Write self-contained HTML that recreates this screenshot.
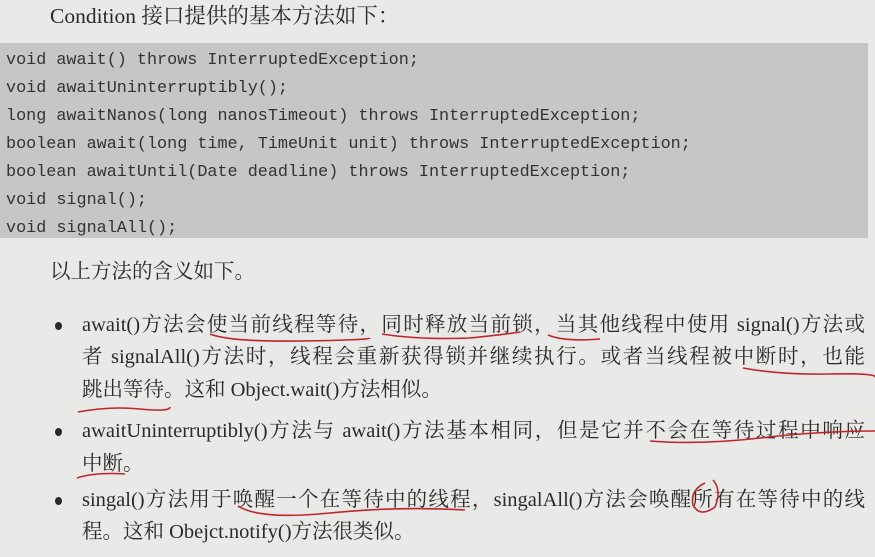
<!DOCTYPE html>
<html><head><meta charset="utf-8"><style>
body{margin:0;width:875px;height:557px;background:#e9e9e7;position:relative;overflow:hidden;color:#2a2a2a}
.t{position:absolute;white-space:nowrap;font-family:"Liberation Serif","Noto Serif CJK SC",serif;font-size:20.5px;line-height:1}
.j{width:783px;text-align:justify;text-align-last:justify;white-space:normal}
.box{position:absolute;left:0;top:43px;width:868px;height:195px;background:#c6c6c4}
.c{position:absolute;left:6px;white-space:nowrap;font-family:"Liberation Mono",monospace;font-size:16.8px;line-height:1;color:#333}
.b{position:absolute;left:55px;width:7px;height:8px;border-radius:50%;background:#2a2a2a}
</style></head><body>
<div class="t" style="left:50px;top:6px;font-size:21.5px">Condition 接口提供的基本方法如下：</div>
<div class="box"></div>
<div class="c" style="top:53px">void await() throws InterruptedException;</div>
<div class="c" style="top:81px">void awaitUninterruptibly();</div>
<div class="c" style="top:109px">long awaitNanos(long nanosTimeout) throws InterruptedException;</div>
<div class="c" style="top:137px">boolean await(long time, TimeUnit unit) throws InterruptedException;</div>
<div class="c" style="top:165px">boolean awaitUntil(Date deadline) throws InterruptedException;</div>
<div class="c" style="top:193px">void signal();</div>
<div class="c" style="top:221px">void signalAll();</div>
<div class="t" style="left:50px;top:262px">以上方法的含义如下。</div>
<div class="b" style="top:322px"></div>
<div class="t j" style="left:82px;top:315px">await()方法会使当前线程等待，同时释放当前锁，当其他线程中使用 signal()方法或</div>
<div class="t j" style="left:82px;top:347px">者 signalAll()方法时，线程会重新获得锁并继续执行。或者当线程被中断时，也能</div>
<div class="t" style="left:82px;top:380px">跳出等待。这和 Object.wait()方法相似。</div>
<div class="b" style="top:428px"></div>
<div class="t j" style="left:82px;top:421px">awaitUninterruptibly()方法与 await()方法基本相同，但是它并不会在等待过程中响应</div>
<div class="t" style="left:82px;top:454px">中断。</div>
<div class="b" style="top:497px"></div>
<div class="t j" style="left:82px;top:490px">singal()方法用于唤醒一个在等待中的线程，singalAll()方法会唤醒所有在等待中的线</div>
<div class="t" style="left:82px;top:522px">程。这和 Obejct.notify()方法很类似。</div>
<svg width="875" height="557" style="position:absolute;left:0;top:0" fill="none" stroke="#c0242a" stroke-width="1.6">
<path d="M210 334 Q230 342 300 341 T370 338"/>
<path d="M382 334 Q420 340 470 338 Q500 335 520 332"/>
<path d="M548 335 Q565 342 600 339"/>
<path d="M743 368 Q780 375 830 374 T875 378"/>
<path d="M78 412 Q110 406 140 409 T170 407"/>
<path d="M650 441 Q700 445 760 438 T875 431"/>
<path d="M77 478 Q95 472 125 474"/>
<path d="M238 506 Q260 520 330 513 T465 510"/>
<path d="M705 483 Q690 490 693 505 Q700 518 715 507 Q722 490 713 480"/>
</svg>
</body></html>
